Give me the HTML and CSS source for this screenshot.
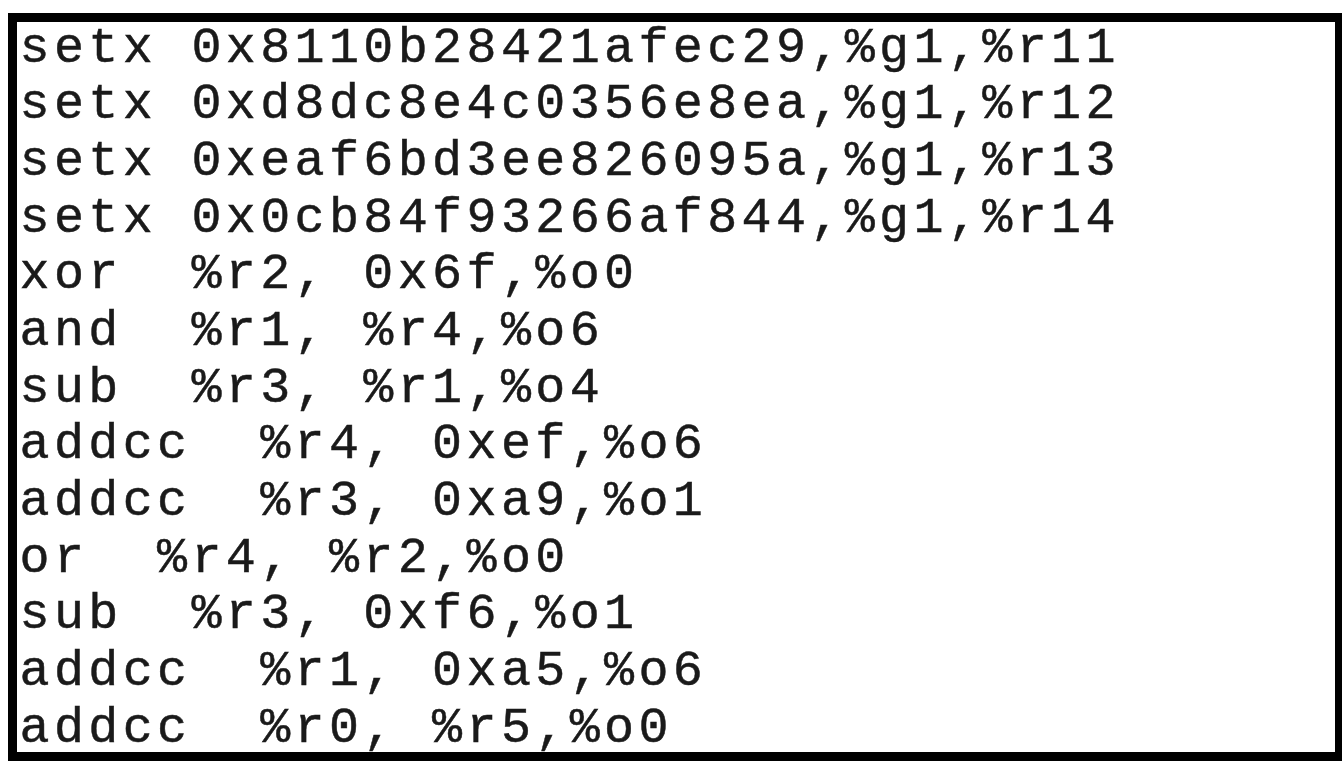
FILE: index.html
```html
<!DOCTYPE html>
<html>
<head>
<meta charset="utf-8">
<link rel="stylesheet" href="styles.css">
</head>
<body>
<div class="frame">
<pre class="code">setx 0x8110b28421afec29,%g1,%r11
setx 0xd8dc8e4c0356e8ea,%g1,%r12
setx 0xeaf6bd3ee826095a,%g1,%r13
setx 0x0cb84f93266af844,%g1,%r14
xor  %r2, 0x6f,%o0
and  %r1, %r4,%o6
sub  %r3, %r1,%o4
addcc  %r4, 0xef,%o6
addcc  %r3, 0xa9,%o1
or  %r4, %r2,%o0
sub  %r3, 0xf6,%o1
addcc  %r1, 0xa5,%o6
addcc  %r0, %r5,%o0</pre>
</div>
</body>
</html>
```
FILE: styles.css
```css
html, body {
  margin: 0;
  padding: 0;
  background: #ffffff;
  overflow: hidden;
}

.frame {
  margin: 13px 0 0 8px;
  width: 1318px;
  height: 730px;
  border: 9px solid #000000;
  border-right-width: 7px;
  background: #ffffff;
  overflow: hidden;
}

.code {
  margin: -1.5px 0 0 0;
  padding: 0 0 0 2.5px;
  font-family: "Courier New", "Liberation Mono", monospace;
  font-size: 50px;
  letter-spacing: 4.38px;
  line-height: 56.67px;
  color: #1a1a1a;
  -webkit-text-stroke: 0.5px #1a1a1a;
  white-space: pre;
}
```
